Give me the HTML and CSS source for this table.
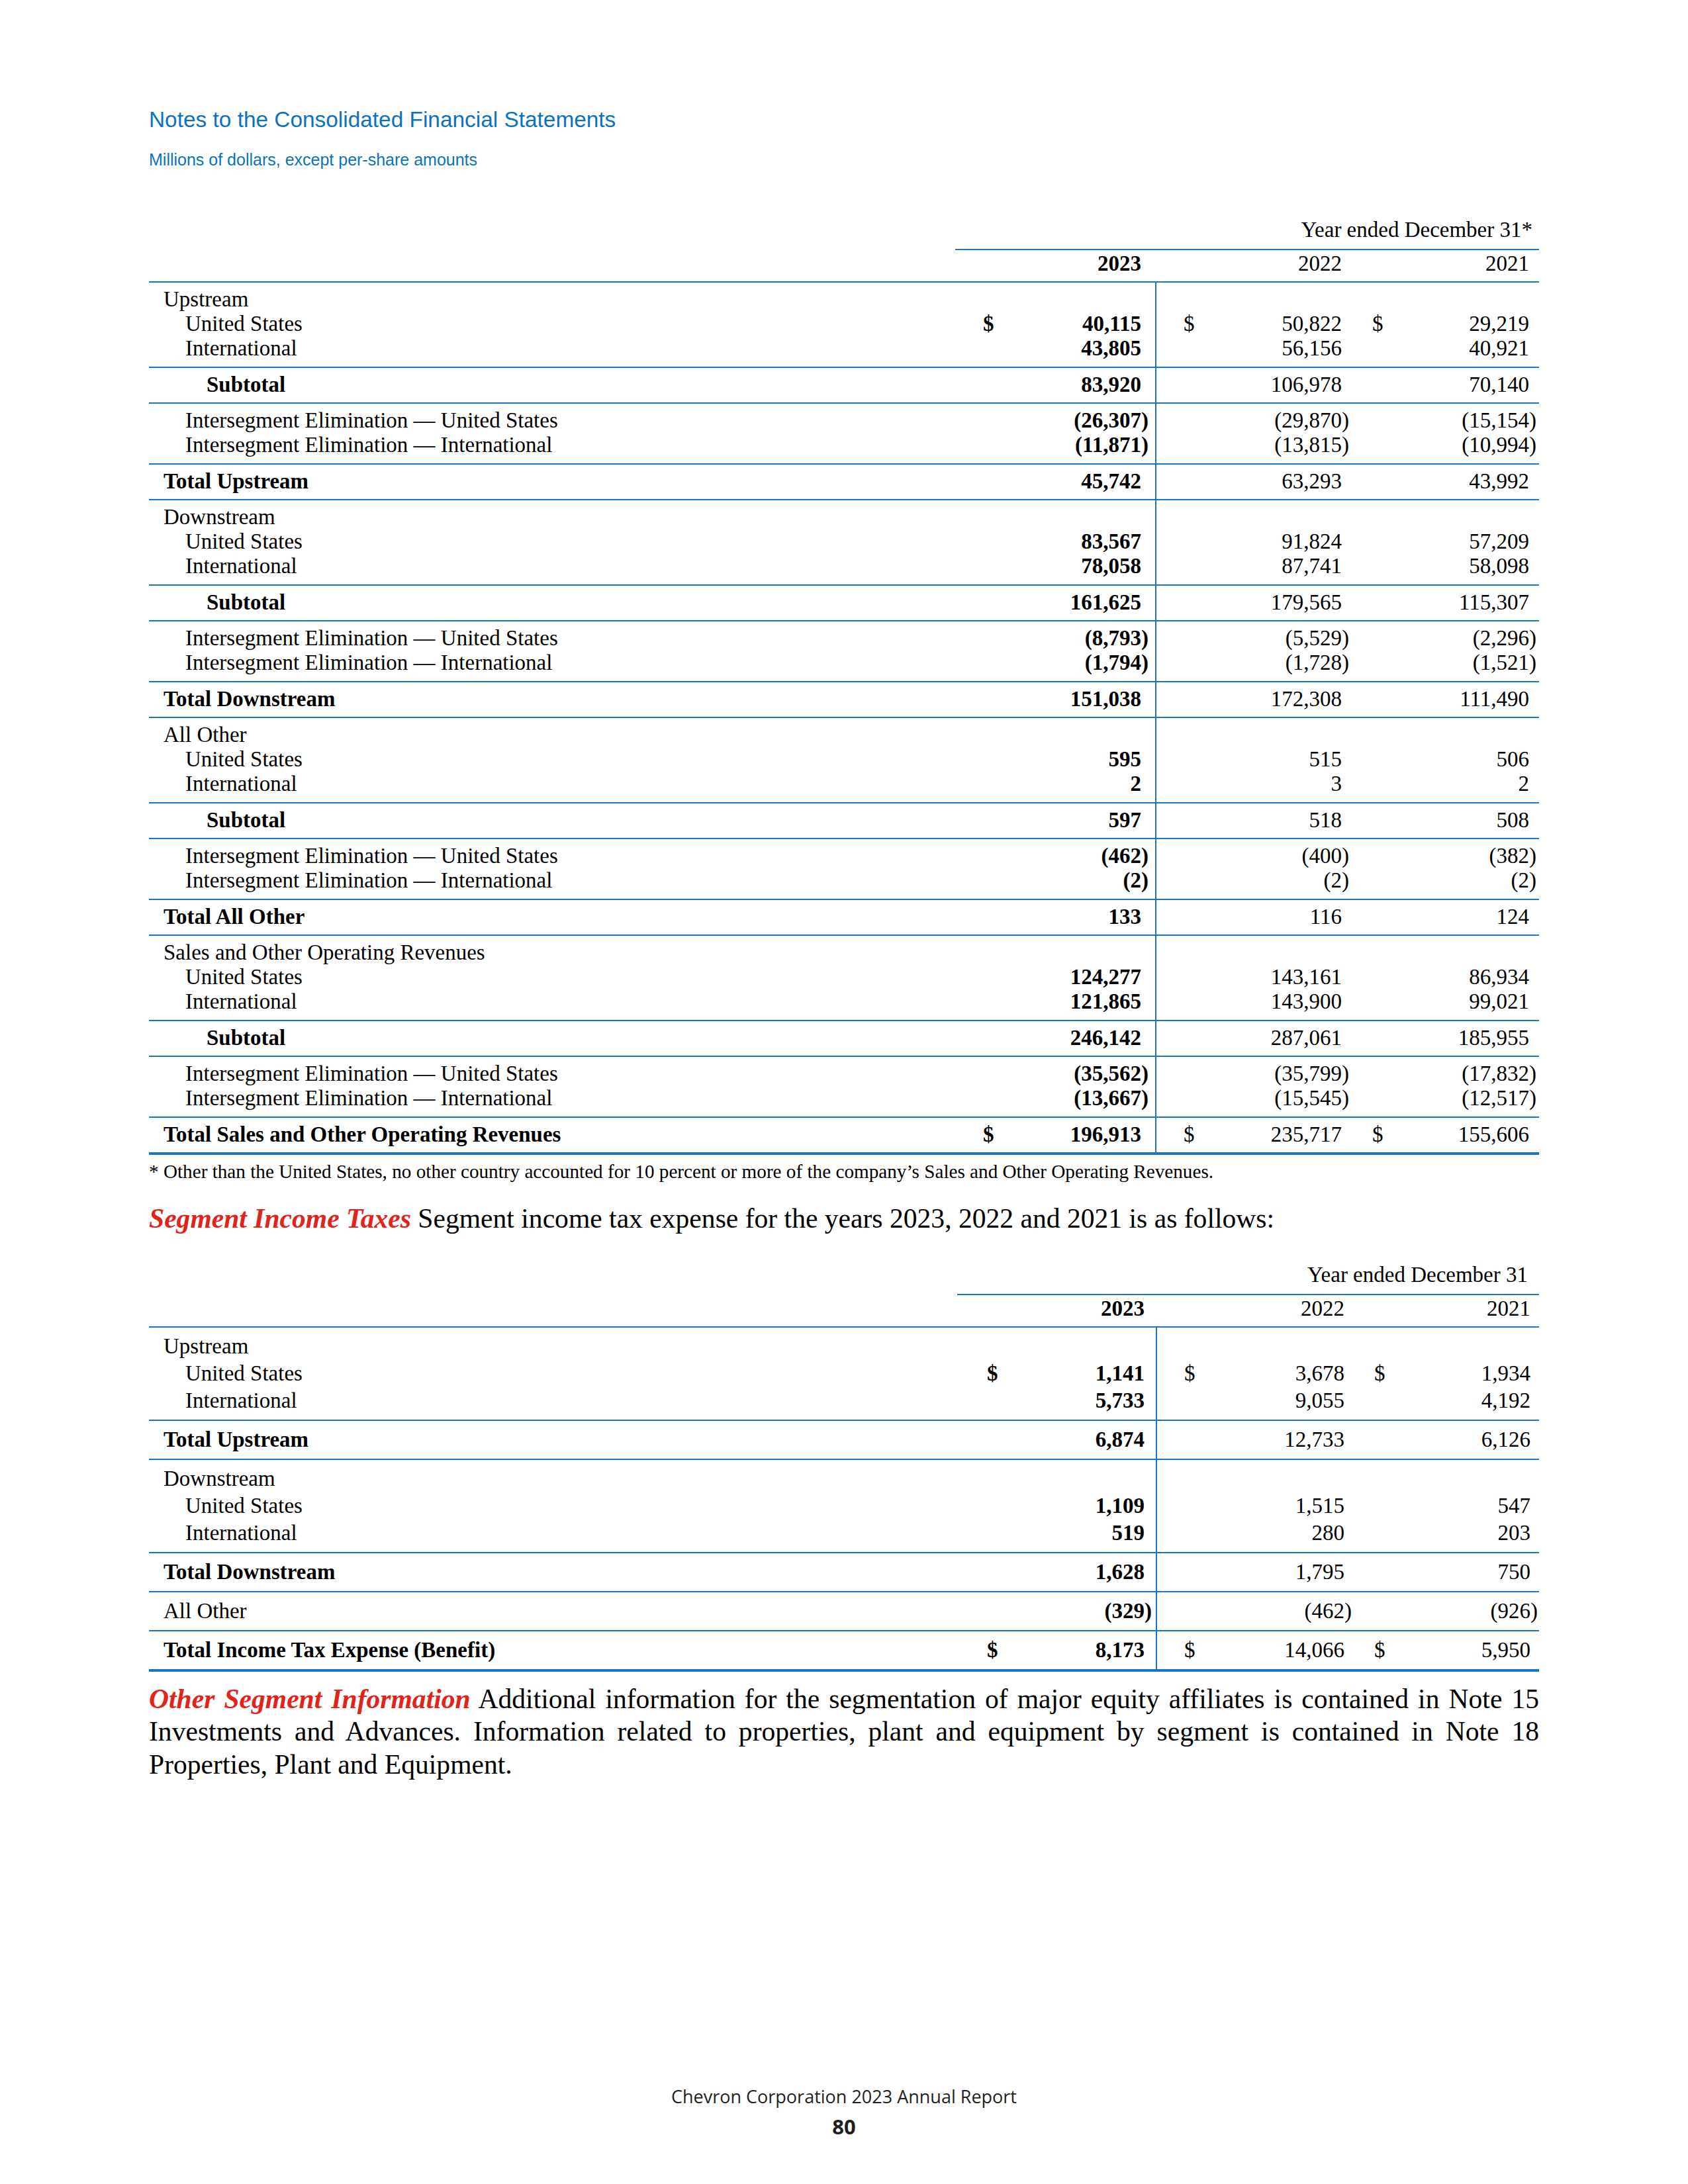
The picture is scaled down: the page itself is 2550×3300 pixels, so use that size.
FILE: index.html
```html
<!DOCTYPE html>
<html lang="en">
<head>
<meta charset="utf-8">
<title>Notes to the Consolidated Financial Statements</title>
<link rel="stylesheet" href="styles.css">
</head>
<body>
<div class="page">
  <header class="doc-head">
    <h1 class="title">Notes to the Consolidated Financial Statements</h1>
    <p class="subtitle">Millions of dollars, except per-share amounts</p>
  </header>

  <section class="fin t1">
    <div class="caption">Year ended December 31*</div>
    <div class="grid years">
      <div class="lab"></div>
      <div class="c c1 b">2023</div>
      <div class="c c2">2022</div>
      <div class="c c3">2021</div>
    </div>

    <!-- Upstream -->
    <div class="grid sec">
      <div class="lab"><div class="ln">Upstream</div><div class="ln ind">United States</div><div class="ln ind">International</div></div>
      <div class="c c1 b"><div class="v"></div><div class="v"><span class="cur">$</span><span class="n">40,115</span></div><div class="v"><span class="n">43,805</span></div></div>
      <div class="c c2"><div class="v"></div><div class="v"><span class="cur">$</span><span class="n">50,822</span></div><div class="v"><span class="n">56,156</span></div></div>
      <div class="c c3"><div class="v"></div><div class="v"><span class="cur">$</span><span class="n">29,219</span></div><div class="v"><span class="n">40,921</span></div></div>
    </div>
    <div class="grid sec">
      <div class="lab"><div class="ln sub b">Subtotal</div></div>
      <div class="c c1 b"><div class="v"><span class="n">83,920</span></div></div>
      <div class="c c2"><div class="v"><span class="n">106,978</span></div></div>
      <div class="c c3"><div class="v"><span class="n">70,140</span></div></div>
    </div>
    <div class="grid sec">
      <div class="lab"><div class="ln ind">Intersegment Elimination — United States</div><div class="ln ind">Intersegment Elimination — International</div></div>
      <div class="c c1 b"><div class="v"><span class="n">(26,307<span class="rp">)</span></span></div><div class="v"><span class="n">(11,871<span class="rp">)</span></span></div></div>
      <div class="c c2"><div class="v"><span class="n">(29,870<span class="rp">)</span></span></div><div class="v"><span class="n">(13,815<span class="rp">)</span></span></div></div>
      <div class="c c3"><div class="v"><span class="n">(15,154<span class="rp">)</span></span></div><div class="v"><span class="n">(10,994<span class="rp">)</span></span></div></div>
    </div>
    <div class="grid sec">
      <div class="lab"><div class="ln b">Total Upstream</div></div>
      <div class="c c1 b"><div class="v"><span class="n">45,742</span></div></div>
      <div class="c c2"><div class="v"><span class="n">63,293</span></div></div>
      <div class="c c3"><div class="v"><span class="n">43,992</span></div></div>
    </div>

    <!-- Downstream -->
    <div class="grid sec">
      <div class="lab"><div class="ln">Downstream</div><div class="ln ind">United States</div><div class="ln ind">International</div></div>
      <div class="c c1 b"><div class="v"></div><div class="v"><span class="n">83,567</span></div><div class="v"><span class="n">78,058</span></div></div>
      <div class="c c2"><div class="v"></div><div class="v"><span class="n">91,824</span></div><div class="v"><span class="n">87,741</span></div></div>
      <div class="c c3"><div class="v"></div><div class="v"><span class="n">57,209</span></div><div class="v"><span class="n">58,098</span></div></div>
    </div>
    <div class="grid sec">
      <div class="lab"><div class="ln sub b">Subtotal</div></div>
      <div class="c c1 b"><div class="v"><span class="n">161,625</span></div></div>
      <div class="c c2"><div class="v"><span class="n">179,565</span></div></div>
      <div class="c c3"><div class="v"><span class="n">115,307</span></div></div>
    </div>
    <div class="grid sec">
      <div class="lab"><div class="ln ind">Intersegment Elimination — United States</div><div class="ln ind">Intersegment Elimination — International</div></div>
      <div class="c c1 b"><div class="v"><span class="n">(8,793<span class="rp">)</span></span></div><div class="v"><span class="n">(1,794<span class="rp">)</span></span></div></div>
      <div class="c c2"><div class="v"><span class="n">(5,529<span class="rp">)</span></span></div><div class="v"><span class="n">(1,728<span class="rp">)</span></span></div></div>
      <div class="c c3"><div class="v"><span class="n">(2,296<span class="rp">)</span></span></div><div class="v"><span class="n">(1,521<span class="rp">)</span></span></div></div>
    </div>
    <div class="grid sec">
      <div class="lab"><div class="ln b">Total Downstream</div></div>
      <div class="c c1 b"><div class="v"><span class="n">151,038</span></div></div>
      <div class="c c2"><div class="v"><span class="n">172,308</span></div></div>
      <div class="c c3"><div class="v"><span class="n">111,490</span></div></div>
    </div>

    <!-- All Other -->
    <div class="grid sec">
      <div class="lab"><div class="ln">All Other</div><div class="ln ind">United States</div><div class="ln ind">International</div></div>
      <div class="c c1 b"><div class="v"></div><div class="v"><span class="n">595</span></div><div class="v"><span class="n">2</span></div></div>
      <div class="c c2"><div class="v"></div><div class="v"><span class="n">515</span></div><div class="v"><span class="n">3</span></div></div>
      <div class="c c3"><div class="v"></div><div class="v"><span class="n">506</span></div><div class="v"><span class="n">2</span></div></div>
    </div>
    <div class="grid sec">
      <div class="lab"><div class="ln sub b">Subtotal</div></div>
      <div class="c c1 b"><div class="v"><span class="n">597</span></div></div>
      <div class="c c2"><div class="v"><span class="n">518</span></div></div>
      <div class="c c3"><div class="v"><span class="n">508</span></div></div>
    </div>
    <div class="grid sec">
      <div class="lab"><div class="ln ind">Intersegment Elimination — United States</div><div class="ln ind">Intersegment Elimination — International</div></div>
      <div class="c c1 b"><div class="v"><span class="n">(462<span class="rp">)</span></span></div><div class="v"><span class="n">(2<span class="rp">)</span></span></div></div>
      <div class="c c2"><div class="v"><span class="n">(400<span class="rp">)</span></span></div><div class="v"><span class="n">(2<span class="rp">)</span></span></div></div>
      <div class="c c3"><div class="v"><span class="n">(382<span class="rp">)</span></span></div><div class="v"><span class="n">(2<span class="rp">)</span></span></div></div>
    </div>
    <div class="grid sec">
      <div class="lab"><div class="ln b">Total All Other</div></div>
      <div class="c c1 b"><div class="v"><span class="n">133</span></div></div>
      <div class="c c2"><div class="v"><span class="n">116</span></div></div>
      <div class="c c3"><div class="v"><span class="n">124</span></div></div>
    </div>

    <!-- Sales and Other Operating Revenues -->
    <div class="grid sec">
      <div class="lab"><div class="ln">Sales and Other Operating Revenues</div><div class="ln ind">United States</div><div class="ln ind">International</div></div>
      <div class="c c1 b"><div class="v"></div><div class="v"><span class="n">124,277</span></div><div class="v"><span class="n">121,865</span></div></div>
      <div class="c c2"><div class="v"></div><div class="v"><span class="n">143,161</span></div><div class="v"><span class="n">143,900</span></div></div>
      <div class="c c3"><div class="v"></div><div class="v"><span class="n">86,934</span></div><div class="v"><span class="n">99,021</span></div></div>
    </div>
    <div class="grid sec">
      <div class="lab"><div class="ln sub b">Subtotal</div></div>
      <div class="c c1 b"><div class="v"><span class="n">246,142</span></div></div>
      <div class="c c2"><div class="v"><span class="n">287,061</span></div></div>
      <div class="c c3"><div class="v"><span class="n">185,955</span></div></div>
    </div>
    <div class="grid sec">
      <div class="lab"><div class="ln ind">Intersegment Elimination — United States</div><div class="ln ind">Intersegment Elimination — International</div></div>
      <div class="c c1 b"><div class="v"><span class="n">(35,562<span class="rp">)</span></span></div><div class="v"><span class="n">(13,667<span class="rp">)</span></span></div></div>
      <div class="c c2"><div class="v"><span class="n">(35,799<span class="rp">)</span></span></div><div class="v"><span class="n">(15,545<span class="rp">)</span></span></div></div>
      <div class="c c3"><div class="v"><span class="n">(17,832<span class="rp">)</span></span></div><div class="v"><span class="n">(12,517<span class="rp">)</span></span></div></div>
    </div>
    <div class="grid sec last">
      <div class="lab"><div class="ln b">Total Sales and Other Operating Revenues</div></div>
      <div class="c c1 b"><div class="v"><span class="cur">$</span><span class="n">196,913</span></div></div>
      <div class="c c2"><div class="v"><span class="cur">$</span><span class="n">235,717</span></div></div>
      <div class="c c3"><div class="v"><span class="cur">$</span><span class="n">155,606</span></div></div>
    </div>
  </section>

  <p class="footnote">* Other than the United States, no other country accounted for 10 percent or more of the company’s Sales and Other Operating Revenues.</p>

  <p class="para para-taxes"><span class="lead">Segment Income Taxes</span> Segment income tax expense for the years 2023, 2022 and 2021 is as follows:</p>

  <section class="fin t2">
    <div class="caption">Year ended December 31</div>
    <div class="grid years">
      <div class="lab"></div>
      <div class="c c1 b">2023</div>
      <div class="c c2">2022</div>
      <div class="c c3">2021</div>
    </div>
    <div class="grid sec">
      <div class="lab"><div class="ln">Upstream</div><div class="ln ind">United States</div><div class="ln ind">International</div></div>
      <div class="c c1 b"><div class="v"></div><div class="v"><span class="cur">$</span><span class="n">1,141</span></div><div class="v"><span class="n">5,733</span></div></div>
      <div class="c c2"><div class="v"></div><div class="v"><span class="cur">$</span><span class="n">3,678</span></div><div class="v"><span class="n">9,055</span></div></div>
      <div class="c c3"><div class="v"></div><div class="v"><span class="cur">$</span><span class="n">1,934</span></div><div class="v"><span class="n">4,192</span></div></div>
    </div>
    <div class="grid sec">
      <div class="lab"><div class="ln b">Total Upstream</div></div>
      <div class="c c1 b"><div class="v"><span class="n">6,874</span></div></div>
      <div class="c c2"><div class="v"><span class="n">12,733</span></div></div>
      <div class="c c3"><div class="v"><span class="n">6,126</span></div></div>
    </div>
    <div class="grid sec">
      <div class="lab"><div class="ln">Downstream</div><div class="ln ind">United States</div><div class="ln ind">International</div></div>
      <div class="c c1 b"><div class="v"></div><div class="v"><span class="n">1,109</span></div><div class="v"><span class="n">519</span></div></div>
      <div class="c c2"><div class="v"></div><div class="v"><span class="n">1,515</span></div><div class="v"><span class="n">280</span></div></div>
      <div class="c c3"><div class="v"></div><div class="v"><span class="n">547</span></div><div class="v"><span class="n">203</span></div></div>
    </div>
    <div class="grid sec">
      <div class="lab"><div class="ln b">Total Downstream</div></div>
      <div class="c c1 b"><div class="v"><span class="n">1,628</span></div></div>
      <div class="c c2"><div class="v"><span class="n">1,795</span></div></div>
      <div class="c c3"><div class="v"><span class="n">750</span></div></div>
    </div>
    <div class="grid sec">
      <div class="lab"><div class="ln">All Other</div></div>
      <div class="c c1 b"><div class="v"><span class="n">(329<span class="rp">)</span></span></div></div>
      <div class="c c2"><div class="v"><span class="n">(462<span class="rp">)</span></span></div></div>
      <div class="c c3"><div class="v"><span class="n">(926<span class="rp">)</span></span></div></div>
    </div>
    <div class="grid sec last">
      <div class="lab"><div class="ln b">Total Income Tax Expense (Benefit)</div></div>
      <div class="c c1 b"><div class="v"><span class="cur">$</span><span class="n">8,173</span></div></div>
      <div class="c c2"><div class="v"><span class="cur">$</span><span class="n">14,066</span></div></div>
      <div class="c c3"><div class="v"><span class="cur">$</span><span class="n">5,950</span></div></div>
    </div>
  </section>

  <p class="para para-other"><span class="lead">Other Segment Information</span> Additional information for the segmentation of major equity affiliates is contained in Note 15 Investments and Advances. Information related to properties, plant and equipment by segment is contained in Note 18 Properties, Plant and Equipment.</p>

  <footer class="doc-foot">
    <div class="foot-title">Chevron Corporation 2023 Annual Report</div>
    <div class="pageno">80</div>
  </footer>
</div>
</body>
</html>
```

FILE: styles.css
```css
html, body {
  margin: 0;
  padding: 0;
  background: #ffffff;
}

.page {
  width: 2550px;
  min-height: 3300px;
  box-sizing: border-box;
  padding: 0 225px 71px;
  display: flex;
  flex-direction: column;
  color: #000;
  font-family: "Liberation Serif", "Times New Roman", serif;
}

/* ---------- page header ---------- */
.doc-head {
  padding-top: 162px;
}
.title {
  margin: 0;
  font: 400 33.4px/38px "Liberation Sans", Arial, sans-serif;
  color: #0b72bd;
}
.subtitle {
  margin: 26px 0 0;
  font: 400 25px/30px "Liberation Sans", Arial, sans-serif;
  color: #0b72bd;
}

/* ---------- financial tables ---------- */
.fin {
  --line: #1b76bf;
  --lh: 37px;
  --pt: 7px;
  --pb: 8.5px;
  font-size: 33px;
}
.t1 {
  margin-top: 73px;
}
.t2 {
  --lh: 41px;
  --pt: 8px;
  --pb: 8px;
  margin-top: 41px;
}

.caption {
  text-align: right;
  line-height: 37px;
  padding: 0 10px 10px 0;
}
.t2 .caption {
  padding-right: 17px;
}

.grid {
  display: grid;
  grid-template-columns: 1fr 302px 300px 280px;
}
.t2 .grid {
  grid-template-columns: 1fr 300px 297px 282px;
}

.b {
  font-weight: 700;
}

/* years header */
.years {
  border-bottom: 2px solid var(--line);
  line-height: 37px;
}
.years .c {
  border-top: 2px solid var(--line);
  padding-top: 2px;
  padding-bottom: 8px;
  text-align: right;
}

/* data sections */
.sec {
  border-bottom: 2px solid var(--line);
  line-height: var(--lh);
}
.sec > div {
  padding-top: var(--pt);
  padding-bottom: var(--pb);
}
.sec.last {
  border-bottom-width: 4px;
}
.sec .c2 {
  border-left: 2px solid var(--line);
}

.lab {
  padding-left: 22px;
}
.ln {
  white-space: nowrap;
}
.ln.ind {
  padding-left: 33px;
}
.ln.sub {
  padding-left: 65px;
}

/* numeric columns */
.c1 { padding-left: 42px; padding-right: 21px; }
.c2 { padding-left: 41px; padding-right: 18px; }
.c3 { padding-left: 28px; padding-right: 15px; }

.t2 .c1 { padding-left: 45px; padding-right: 17px; }
.t2 .c2 { padding-left: 41px; padding-right: 12px; }
.t2 .c3 { padding-left: 33px; padding-right: 13px; }

.v {
  display: flex;
  min-height: var(--lh);
  white-space: nowrap;
}
.n {
  margin-left: auto;
}
.rp {
  margin-right: -0.333em;
}

/* ---------- text ---------- */
.footnote {
  margin: 8px 0 0;
  font-size: 29.2px;
  line-height: 34px;
}

.para {
  margin: 0;
  font-size: 41.6px;
  line-height: 49.5px;
}
.para-taxes {
  margin-top: 30px;
}
.para-other {
  margin-top: 17px;
  text-align: justify;
}
.lead {
  color: #e2231a;
  font-weight: 700;
  font-style: italic;
}

/* ---------- footer ---------- */
.doc-foot {
  margin-top: auto;
  text-align: center;
  font-family: "Open Sans", "Noto Sans", sans-serif;
  color: #231f20;
}
.foot-title {
  font-size: 27px;
  line-height: 32px;
}
.pageno {
  margin-top: 13px;
  font-size: 31px;
  line-height: 32px;
  font-weight: 700;
}
```
